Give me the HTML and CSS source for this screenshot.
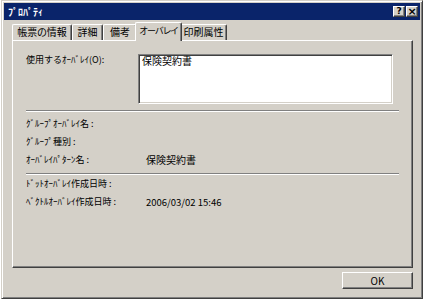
FILE: index.html
```html
<!DOCTYPE html>
<html>
<head>
  <link rel="stylesheet" href="styles.css">
</head>
<body>
  <div class="window">
    <div class="titlebar">
      <span class="title">ﾌﾟﾛﾊﾟﾃｨ</span>
      <div class="caption-btns">
        <span class="cbtn">?</span>
        <span class="cbtn cbtn-close">×</span>
      </div>
    </div>

    <!-- tabs -->
    <div class="tabs">
      <div class="tab tab-info">帳票の情報</div>
      <div class="tab tab-detail">詳細</div>
      <div class="tab tab-note">備考</div>
      <div class="tab tab-active">オーバレイ</div>
      <div class="tab tab-print">印刷属性</div>
    </div>

    <div class="panel">
      <div class="overlay-row">
        <div class="label label-first">使用するｵｰﾊﾞﾚｲ(O):</div>
        <div class="listbox">
          <div class="list-item">保険契約書</div>
        </div>
      </div>
      <div class="sep"></div>
      <div class="info">
        <div class="label">ｸﾞﾙｰﾌﾟｵｰﾊﾞﾚｲ名 :</div><div class="value"></div>
        <div class="label">ｸﾞﾙｰﾌﾟ種別 :</div><div class="value"></div>
        <div class="label">ｵｰﾊﾞﾚｲﾊﾟﾀｰﾝ名 :</div><div class="value">保険契約書</div>
      </div>
      <div class="sep sep-2"></div>
      <div class="info">
        <div class="label">ﾄﾞｯﾄｵｰﾊﾞﾚｲ作成日時 :</div><div class="value"></div>
        <div class="label">ﾍﾞｸﾄﾙｵｰﾊﾞﾚｲ作成日時 :</div><div class="value value-date">2006/03/02 15:46</div>
      </div>
    </div>

    <div class="footer">
      <div class="btn">OK</div>
    </div>
  </div>
</body>
</html>
```

FILE: styles.css
```css
* {
  margin: 0;
  padding: 0;
  box-sizing: border-box;
}

body {
  background-color: #ffffff;
  font-family: "Noto Sans CJK JP", sans-serif;
  font-size: 9px;
  color: #000000;
}

.window {
  width: 422px;
  height: 299px;
  margin-left: 1px;
  padding: 2px;
  background-color: #d4d0c8;
  border: 1px solid;
  border-color: #d4d0c8 #404040 #404040 #d4d0c8;
  box-shadow: inset 1px 1px #ffffff, inset -1px -1px #808080;
  display: flex;
  flex-direction: column;
}

.titlebar {
  height: 17px;
  background-color: #0a246a;
  display: flex;
  align-items: center;
  justify-content: space-between;
  padding: 0 2px 0 4px;
}

.title {
  color: #ffffff;
  font-weight: bold;
  font-size: 10px;
  line-height: 17px;
}

.caption-btns {
  display: flex;
  gap: 1px;
}

.cbtn {
  width: 12px;
  height: 11px;
  background-color: #d4d0c8;
  border: 1px solid;
  border-color: #ffffff #404040 #404040 #ffffff;
  box-shadow: inset -1px -1px #808080;
  font-family: "DejaVu Sans", sans-serif;
  font-weight: bold;
  font-size: 9px;
  line-height: 9px;
  text-align: center;
}

.cbtn-close {
  font-size: 11px;
}

.tabs {
  display: flex;
  align-items: flex-end;
  height: 18px;
  margin: 2px 0 0 8px;
  position: relative;
  z-index: 1;
  font-size: 10px;
  font-feature-settings: "palt";
  white-space: nowrap;
}

.tab {
  height: 16px;
  line-height: 14px;
  text-align: center;
  border: 1px solid;
  border-bottom: none;
  border-color: #ffffff #404040 #404040 #ffffff;
  border-radius: 2px 2px 0 0;
  box-shadow: inset -1px 0 #808080;
}

.tab-info {
  width: 60px;
}

.tab-detail {
  width: 31px;
}

.tab-note {
  width: 34px;
}

.tab-print {
  width: 47px;
}

.tab-active {
  width: 47px;
  height: 19px;
  margin: 0 -2px -1px -2px;
  line-height: 16px;
  font-size: 9px;
  letter-spacing: -0.6px;
  background-color: #d4d0c8;
  position: relative;
  z-index: 2;
}

.panel {
  height: 228px;
  margin: 0 7px 0 8px;
  padding: 13px 13px 0 13px;
  border: 1px solid;
  border-color: #ffffff #404040 #404040 #ffffff;
  box-shadow: inset -1px -1px #808080;
}

.overlay-row {
  display: flex;
}

.label {
  line-height: 18px;
}

.label-first {
  width: 112px;
  margin-top: -3px;
}

.listbox {
  width: 255px;
  height: 50px;
  background-color: #ffffff;
  border: 1px solid;
  border-color: #808080 #ffffff #ffffff #808080;
  box-shadow: inset 1px 1px #404040, inset -1px -1px #d4d0c8;
  padding: 0 3px;
}

.list-item {
  font-size: 10px;
  line-height: 12px;
}

.sep {
  height: 2px;
  margin: 6px 0 3px 0;
  border-top: 1px solid #808080;
  border-bottom: 1px solid #ffffff;
}

.sep-2 {
  margin: 4px 0 0 0;
}

.info {
  display: grid;
  grid-template-columns: 120px 1fr;
}

.value {
  font-size: 10px;
  line-height: 18px;
}

.value-date {
  font-size: 9.5px;
}

.footer {
  display: flex;
  justify-content: flex-end;
  padding: 4px 7px 0 0;
}

.btn {
  width: 71px;
  height: 17px;
  border: 1px solid;
  border-color: #ffffff #404040 #404040 #ffffff;
  box-shadow: inset -1px -1px #808080;
  font-size: 10px;
  line-height: 15px;
  text-align: center;
}
```
